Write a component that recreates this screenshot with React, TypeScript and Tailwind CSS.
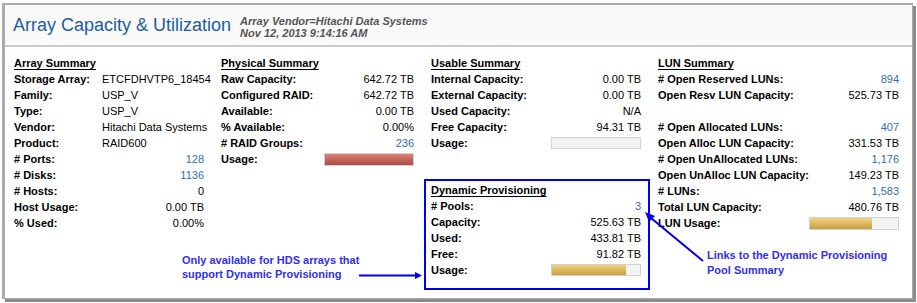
import React from 'react';

type Row = {
  label?: string;
  value?: string;
  link?: boolean;
  left?: boolean;
  bar?: { pct: number; tone: 'red' | 'gold' | 'none'; h?: number };
};

const arraySummary: Row[] = [
  { label: 'Storage Array:', value: 'ETCFDHVTP6_18454', left: true },
  { label: 'Family:', value: 'USP_V', left: true },
  { label: 'Type:', value: 'USP_V', left: true },
  { label: 'Vendor:', value: 'Hitachi Data Systems', left: true },
  { label: 'Product:', value: 'RAID600', left: true },
  { label: '# Ports:', value: '128', link: true },
  { label: '# Disks:', value: '1136', link: true },
  { label: '# Hosts:', value: '0' },
  { label: 'Host Usage:', value: '0.00 TB' },
  { label: '% Used:', value: '0.00%' },
];

const physicalSummary: Row[] = [
  { label: 'Raw Capacity:', value: '642.72 TB' },
  { label: 'Configured RAID:', value: '642.72 TB' },
  { label: 'Available:', value: '0.00 TB' },
  { label: '% Available:', value: '0.00%' },
  { label: '# RAID Groups:', value: '236', link: true },
  { label: 'Usage:', bar: { pct: 100, tone: 'red', h: 13 } },
];

const usableSummary: Row[] = [
  { label: 'Internal Capacity:', value: '0.00 TB' },
  { label: 'External Capacity:', value: '0.00 TB' },
  { label: 'Used Capacity:', value: 'N/A' },
  { label: 'Free Capacity:', value: '94.31 TB' },
  { label: 'Usage:', bar: { pct: 0, tone: 'none' } },
];

const dynamicProvisioning: Row[] = [
  { label: '# Pools:', value: '3', link: true },
  { label: 'Capacity:', value: '525.63 TB' },
  { label: 'Used:', value: '433.81 TB' },
  { label: 'Free:', value: '91.82 TB' },
  { label: 'Usage:', bar: { pct: 84, tone: 'gold' } },
];

const lunSummary: Row[] = [
  { label: '# Open Reserved LUNs:', value: '894', link: true },
  { label: 'Open Resv LUN Capacity:', value: '525.73 TB' },
  {},
  { label: '# Open Allocated LUNs:', value: '407', link: true },
  { label: 'Open Alloc LUN Capacity:', value: '331.53 TB' },
  { label: '# Open UnAllocated LUNs:', value: '1,176', link: true },
  { label: 'Open UnAlloc LUN Capacity:', value: '149.23 TB' },
  { label: '# LUNs:', value: '1,583', link: true },
  { label: 'Total LUN Capacity:', value: '480.76 TB' },
  { label: 'LUN Usage:', bar: { pct: 70, tone: 'gold', h: 13 } },
];

const UsageBar: React.FC<{ pct: number; tone: 'red' | 'gold' | 'none'; h?: number }> = ({ pct, tone, h }) => (
  <div
    className={`w-[90px] border border-[#d2d2d2] bg-[#f3f3f3] ${h === 13 ? 'h-[13px]' : 'h-[12px]'}`}
  >
    {tone !== 'none' && (
      <div
        className={`h-full ${
          tone === 'red'
            ? 'bg-linear-to-b from-[#dd8077] to-[#ac4b44]'
            : 'bg-linear-to-b from-[#f0d480] to-[#c89e3a]'
        }`}
        style={{ width: `${pct}%` }}
      />
    )}
  </div>
);

const Section: React.FC<{ title: string; rows: Row[]; labelWidth?: string }> = ({ title, rows, labelWidth }) => (
  <div>
    <div className="h-[16px] leading-[16px] font-bold underline underline-offset-[2px]">{title}</div>
    {rows.map((r, i) => (
      <div key={i} className="flex h-[16px] items-center leading-[16px]">
        {r.label && <span className={`shrink-0 font-bold whitespace-nowrap ${labelWidth ?? ''}`}>{r.label}</span>}
        {r.value && (
          <span
            className={`whitespace-nowrap ${r.left ? '' : 'ml-auto'} ${r.link ? 'text-[#2d6fb6]' : 'text-black'}`}
          >
            {r.value}
          </span>
        )}
        {r.bar && (
          <div className="ml-auto">
            <UsageBar {...r.bar} />
          </div>
        )}
      </div>
    ))}
  </div>
);

export default function App() {
  return (
    <div className="relative w-[917px] h-[303px] bg-white font-['Liberation_Sans',Arial,sans-serif] text-[11px] text-black overflow-hidden">
      {/* Outer frame */}
      <div className="ml-[2px] mt-[3px] w-[911px] h-[296px] border-l-[3px] border-t-[2px] border-r border-b border-[#ababab] shadow-[3px_3px_0_#8c8c8c] bg-white">
        {/* Header */}
        <div className="flex items-start h-[42px] pt-[9px] pl-[8px] bg-[#f9f9f9] border-b-2 border-[#cdcdcd]">
          <h1 className="text-[18px] leading-[22px] text-[#1c5d9e] whitespace-nowrap">Array Capacity &amp; Utilization</h1>
          <div className="ml-[9px] mt-[1px] text-[11px] leading-[12px] font-bold italic text-[#555]">
            <div>Array Vendor=Hitachi Data Systems</div>
            <div>Nov 12, 2013 9:14:16 AM</div>
          </div>
        </div>

        {/* Body */}
        <div className="flex pl-[9px] pt-[8px]">
          <div className="w-[190px]">
            <Section title="Array Summary" rows={arraySummary} labelWidth="w-[88px]" />
          </div>
          <div className="w-[193px] ml-[17px]">
            <Section title="Physical Summary" rows={physicalSummary} />
          </div>
          <div className="w-[210px] ml-[17px]">
            <Section title="Usable Summary" rows={usableSummary} />
            <div className="mt-[28px] -ml-[7px] -mr-[9px] border-2 border-[#0000ee] pl-[5px] pr-[7px] pt-[1px] pb-[10px]">
              <Section title="Dynamic Provisioning" rows={dynamicProvisioning} />
            </div>
          </div>
          <div className="w-[241px] ml-[17px]">
            <Section title="LUN Summary" rows={lunSummary} />
          </div>
        </div>
      </div>

      {/* Callout annotations */}
      <div className="absolute left-[182px] top-[253px] text-[11px] leading-[14px] font-bold text-[#3030f0] whitespace-nowrap">
        <div>Only available for HDS arrays that</div>
        <div>support Dynamic Provisioning</div>
      </div>
      <div className="absolute left-[707px] top-[248px] text-[11px] leading-[15px] font-bold text-[#3030f0] whitespace-nowrap">
        <div>Links to the Dynamic Provisioning</div>
        <div>Pool Summary</div>
      </div>
      <svg className="absolute left-0 top-0 pointer-events-none" width="917" height="303">
        <line x1="359" y1="275.5" x2="416" y2="275.5" stroke="#0000e6" strokeWidth="2" />
        <polygon points="422,275.5 415,272 415,279" fill="#0000e6" />
        <line x1="703" y1="261" x2="651" y2="218" stroke="#0000e6" strokeWidth="2" />
        <polygon points="645,212 655,216 649,222" fill="#0000e6" />
      </svg>
    </div>
  );
}
